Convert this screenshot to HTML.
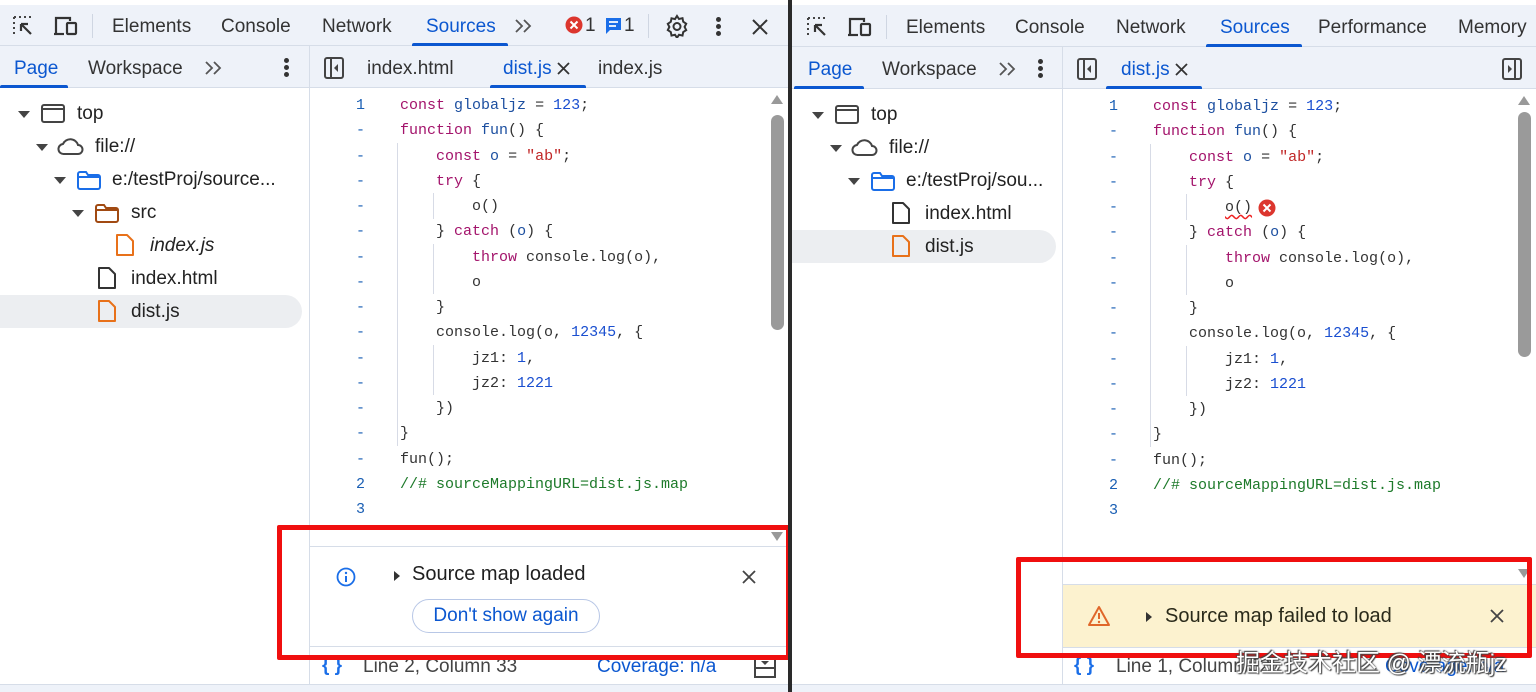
<!DOCTYPE html>
<html><head><meta charset="utf-8">
<style>
*{margin:0;padding:0;box-sizing:border-box}
body{width:1536px;height:692px;overflow:hidden;background:#fff;font-family:"Liberation Sans","Noto Sans CJK SC",sans-serif;color:#1f1f1f;position:relative}
.a{position:absolute}
.tb{background:#eef2f9;border-bottom:1px solid #d6dde8}
.t{position:absolute;font-size:19px;color:#333;white-space:nowrap}
.sel{color:#0b57d0}
.ul{position:absolute;height:3px;background:#0b57d0;border-radius:2px 2px 0 0}
.code{position:absolute;font-family:"Liberation Mono",monospace;font-size:15px;white-space:pre;line-height:25.25px}
.ln{position:absolute;font-family:"Liberation Mono",monospace;font-size:15px;line-height:25.25px;color:#1a5fb4;text-align:right;width:20px;white-space:pre}
.k{color:#a3136b}.v{color:#1c4fa0}.n{color:#1a4fd0}.s{color:#c02626}.c{color:#1d7a2a}.p{color:#333}
.guide{position:absolute;width:1px;background:#d7dbe6}
.tree{position:absolute;font-size:19px;color:#222;white-space:nowrap}
.tri{display:inline-block;width:0;height:0;border-left:6px solid transparent;border-right:6px solid transparent;border-top:7px solid #444}
</style></head><body>

<!-- ============ LEFT PANEL ============ -->
<div class="a tb" style="left:0;top:5px;width:788px;height:41px"></div>
<svg class="a" style="left:12px;top:15px" width="26" height="24" viewBox="0 0 26 24"><path d="M2 2h2M7 2h2M12 2h2M17 2h2M2 2v2M2 7v2M2 12v2M2 17v2" stroke="#444" stroke-width="2"/><path d="M9 9l10 10M9 9v7M9 9h7" stroke="#333" stroke-width="2.2" fill="none"/></svg>
<svg class="a" style="left:53px;top:15px" width="26" height="24" viewBox="0 0 26 24"><path d="M3 18V3h14v3" stroke="#333" stroke-width="2.2" fill="none"/><path d="M1 19h10" stroke="#333" stroke-width="2.2"/><rect x="14" y="8" width="9" height="11" rx="1" stroke="#333" stroke-width="2.2" fill="none"/></svg>
<div class="a" style="left:92px;top:14px;width:1px;height:24px;background:#cfd6e2"></div>
<div class="t" style="left:112px;top:16px">Elements</div>
<div class="t" style="left:221px;top:16px">Console</div>
<div class="t" style="left:322px;top:16px">Network</div>
<div class="t sel" style="left:426px;top:16px">Sources</div>
<div class="ul" style="left:412px;top:43px;width:96px"></div>
<svg class="a" style="left:514px;top:18px" width="20" height="16"><path d="M2 2l6 6-6 6M10 2l6 6-6 6" stroke="#555" stroke-width="1.8" fill="none"/></svg>
<svg class="a" style="left:565px;top:16px" width="18" height="18"><circle cx="9" cy="9" r="8.5" fill="#dc362e"/><path d="M5.5 5.5l7 7M12.5 5.5l-7 7" stroke="#fff" stroke-width="2"/></svg>
<div class="t" style="left:585px;top:15px">1</div>
<svg class="a" style="left:605px;top:17px" width="18" height="18"><path d="M1 1h15v12H5l-4 4z" fill="#1a6ee8"/><path d="M4 5h9M4 9h7" stroke="#fff" stroke-width="1.8"/></svg>
<div class="t" style="left:624px;top:15px">1</div>
<div class="a" style="left:648px;top:14px;width:1px;height:24px;background:#cfd6e2"></div>
<svg class="a" style="left:665px;top:14px" width="24" height="24" viewBox="0 0 24 24"><path d="M12 2l2 3 3.5-.8.7 3.5 3 2-1.6 3.2 1.6 3.2-3 2-.7 3.5-3.5-.8-2 3-2-3-3.5.8-.7-3.5-3-2L4.4 13 2.8 9.8l3-2 .7-3.5 3.5.8z" fill="none" stroke="#333" stroke-width="2"/><circle cx="12" cy="12.5" r="3.5" fill="none" stroke="#333" stroke-width="2"/></svg>
<div class="a" style="left:716px;top:17px;width:5px;height:5px;border-radius:50%;background:#333;box-shadow:0 7px 0 #333,0 14px 0 #333"></div>
<svg class="a" style="left:751px;top:18px" width="18" height="18"><path d="M2 2l14 14M16 2L2 16" stroke="#333" stroke-width="2"/></svg>

<div class="a tb" style="left:0;top:46px;width:788px;height:42px"></div>
<div class="a" style="left:309px;top:46px;width:1px;height:646px;background:#d6dde8"></div>
<div class="t sel" style="left:14px;top:58px">Page</div>
<div class="ul" style="left:0;top:85px;width:68px"></div>
<div class="t" style="left:88px;top:58px">Workspace</div>
<svg class="a" style="left:204px;top:60px" width="20" height="16"><path d="M2 2l6 6-6 6M10 2l6 6-6 6" stroke="#555" stroke-width="1.8" fill="none"/></svg>
<div class="a" style="left:284px;top:58px;width:5px;height:5px;border-radius:50%;background:#333;box-shadow:0 7px 0 #333,0 14px 0 #333"></div>
<svg class="a" style="left:324px;top:57px" width="20" height="22"><rect x="1" y="1" width="18" height="20" rx="2" fill="none" stroke="#444" stroke-width="2"/><path d="M7 1v20" stroke="#444" stroke-width="2"/><path d="M14 7l-4 4 4 4z" fill="#444"/></svg>
<div class="t" style="left:367px;top:58px">index.html</div>
<div class="t sel" style="left:503px;top:58px">dist.js</div>
<svg class="a" style="left:557px;top:62px" width="13" height="13"><path d="M1 1l11 11M12 1L1 12" stroke="#333" stroke-width="1.8"/></svg>
<div class="ul" style="left:490px;top:85px;width:96px"></div>
<div class="t" style="left:598px;top:58px">index.js</div>

<!-- tree left -->
<div class="a" style="left:0;top:295px;width:302px;height:33px;background:#eceef1;border-radius:0 17px 17px 0"></div>
<div class="tree" style="left:18px;top:102px"><span class="tri"></span></div>
<svg class="a" style="left:41px;top:104px" width="24" height="20"><rect x="1" y="1" width="22" height="17" rx="2" fill="none" stroke="#444" stroke-width="2"/><path d="M1 5h22" stroke="#444" stroke-width="2"/></svg>
<div class="tree" style="left:77px;top:103px">top</div>
<div class="tree" style="left:36px;top:135px"><span class="tri"></span></div>
<svg class="a" style="left:57px;top:136px" width="28" height="20"><path d="M7 18a5 5 0 0 1-1-10 8 8 0 0 1 15 1 4.5 4.5 0 0 1 0 9z" fill="none" stroke="#444" stroke-width="2"/></svg>
<div class="tree" style="left:95px;top:136px">file://</div>
<div class="tree" style="left:54px;top:168px"><span class="tri"></span></div>
<svg class="a" style="left:76px;top:170px" width="26" height="20"><path d="M2 4a2 2 0 0 1 2-2h6l2 3h10a2 2 0 0 1 2 2v10a2 2 0 0 1-2 2H4a2 2 0 0 1-2-2z" fill="none" stroke="#1a6ee8" stroke-width="2"/><path d="M2 7h22" stroke="#1a6ee8" stroke-width="2"/></svg>
<div class="tree" style="left:112px;top:169px">e:/testProj/source...</div>
<div class="tree" style="left:72px;top:201px"><span class="tri"></span></div>
<svg class="a" style="left:94px;top:203px" width="26" height="20"><path d="M2 4a2 2 0 0 1 2-2h6l2 3h10a2 2 0 0 1 2 2v10a2 2 0 0 1-2 2H4a2 2 0 0 1-2-2z" fill="none" stroke="#a14a12" stroke-width="2"/><path d="M2 7h22" stroke="#a14a12" stroke-width="2"/></svg>
<div class="tree" style="left:131px;top:202px">src</div>
<svg class="a" style="left:115px;top:233px" width="20" height="24"><path d="M2 2h10l6 6v14H2z" fill="none" stroke="#e8711a" stroke-width="2" stroke-linejoin="round"/></svg>
<div class="tree" style="left:150px;top:235px;font-style:italic">index.js</div>
<svg class="a" style="left:97px;top:266px" width="20" height="24"><path d="M2 2h10l6 6v14H2z" fill="none" stroke="#333" stroke-width="2" stroke-linejoin="round"/></svg>
<div class="tree" style="left:131px;top:268px">index.html</div>
<svg class="a" style="left:97px;top:299px" width="20" height="24"><path d="M2 2h10l6 6v14H2z" fill="none" stroke="#e8711a" stroke-width="2" stroke-linejoin="round"/></svg>
<div class="tree" style="left:131px;top:301px">dist.js</div>

<!-- code left -->
<div class="ln" style="left:345px;top:93px">1
-
-
-
-
-
-
-
-
-
-
-
-
-
-
2
3</div>
<div class="guide" style="left:397px;top:143px;height:303px"></div>
<div class="guide" style="left:433px;top:193px;height:26px"></div>
<div class="guide" style="left:433px;top:244px;height:50px"></div>
<div class="guide" style="left:433px;top:345px;height:50px"></div>
<div class="code" style="left:400px;top:93px"><span class="k">const</span> <span class="v">globaljz</span> <span class="p">=</span> <span class="n">123</span><span class="p">;</span>
<span class="k">function</span> <span class="v">fun</span><span class="p">() {</span>
    <span class="k">const</span> <span class="v">o</span> <span class="p">=</span> <span class="s">"ab"</span><span class="p">;</span>
    <span class="k">try</span> <span class="p">{</span>
        <span class="p">o()</span>
    <span class="p">}</span> <span class="k">catch</span> <span class="p">(</span><span class="v">o</span><span class="p">) {</span>
        <span class="k">throw</span> <span class="p">console.log(o),</span>
        <span class="p">o</span>
    <span class="p">}</span>
    <span class="p">console.log(o,</span> <span class="n">12345</span><span class="p">, {</span>
        <span class="p">jz1:</span> <span class="n">1</span><span class="p">,</span>
        <span class="p">jz2:</span> <span class="n">1221</span>
    <span class="p">})</span>
<span class="p">}</span>
<span class="p">fun();</span>
<span class="c">//# sourceMappingURL=dist.js.map</span>
</div>
<div class="a" style="left:771px;top:95px;border-left:6px solid transparent;border-right:6px solid transparent;border-bottom:9px solid #999"></div>
<div class="a" style="left:771px;top:115px;width:13px;height:215px;border-radius:7px;background:#9a9a9a"></div>
<div class="a" style="left:771px;top:532px;border-left:6px solid transparent;border-right:6px solid transparent;border-top:9px solid #999"></div>

<!-- info bar left -->
<div class="a" style="left:310px;top:546px;width:478px;height:1px;background:#d6dde8"></div>
<svg class="a" style="left:336px;top:567px" width="20" height="20"><circle cx="10" cy="10" r="8.5" fill="none" stroke="#1a6ee8" stroke-width="1.8"/><path d="M10 9v6" stroke="#1a6ee8" stroke-width="2"/><circle cx="10" cy="6" r="1.2" fill="#1a6ee8"/></svg>
<div class="a" style="left:394px;top:571px;border-top:5px solid transparent;border-bottom:5px solid transparent;border-left:6px solid #333"></div>
<div class="t" style="left:412px;top:563px;font-size:20px;color:#1f1f1f">Source map loaded</div>
<svg class="a" style="left:742px;top:570px" width="14" height="14"><path d="M1 1l12 12M13 1L1 13" stroke="#444" stroke-width="1.8"/></svg>
<div class="a" style="left:412px;top:599px;width:188px;height:34px;border:1px solid #b8c7e6;border-radius:17px;color:#0b57d0;font-size:19px;text-align:center;line-height:32px">Don't show again</div>
<div class="a" style="left:310px;top:646px;width:478px;height:1px;background:#d6dde8"></div>
<div class="t" style="left:322px;top:655px;color:#1a6ee8;font-weight:bold">{ }</div>
<div class="t" style="left:363px;top:656px;color:#444">Line 2, Column 33</div>
<div class="t" style="left:597px;top:656px;color:#0b57d0">Coverage: n/a</div>
<svg class="a" style="left:754px;top:656px" width="22" height="22"><rect x="1" y="1" width="20" height="20" fill="none" stroke="#444" stroke-width="2"/><path d="M1 12h20" stroke="#444" stroke-width="2"/><path d="M7 5h8l-4 4z" fill="#444"/></svg>
<div class="a" style="left:0;top:684px;width:788px;height:8px;background:#eef2f9;border-top:1px solid #d6dde8"></div>
<div class="a" style="left:277px;top:525px;width:514px;height:135px;border:5px solid #f00f0f;border-radius:2px"></div>

<!-- separator -->
<div class="a" style="left:788px;top:0;width:4px;height:692px;background:#2a2a2a"></div>

<!-- ============ RIGHT PANEL ============ -->
<div class="a tb" style="left:792px;top:5px;width:744px;height:42px"></div>
<svg class="a" style="left:806px;top:16px" width="26" height="24" viewBox="0 0 26 24"><path d="M2 2h2M7 2h2M12 2h2M17 2h2M2 2v2M2 7v2M2 12v2M2 17v2" stroke="#444" stroke-width="2"/><path d="M9 9l10 10M9 9v7M9 9h7" stroke="#333" stroke-width="2.2" fill="none"/></svg>
<svg class="a" style="left:847px;top:16px" width="26" height="24" viewBox="0 0 26 24"><path d="M3 18V3h14v3" stroke="#333" stroke-width="2.2" fill="none"/><path d="M1 19h10" stroke="#333" stroke-width="2.2"/><rect x="14" y="8" width="9" height="11" rx="1" stroke="#333" stroke-width="2.2" fill="none"/></svg>
<div class="a" style="left:886px;top:15px;width:1px;height:24px;background:#cfd6e2"></div>
<div class="t" style="left:906px;top:17px">Elements</div>
<div class="t" style="left:1015px;top:17px">Console</div>
<div class="t" style="left:1116px;top:17px">Network</div>
<div class="t sel" style="left:1220px;top:17px">Sources</div>
<div class="ul" style="left:1206px;top:44px;width:96px"></div>
<div class="t" style="left:1318px;top:17px">Performance</div>
<div class="t" style="left:1458px;top:17px">Memory</div>

<div class="a tb" style="left:792px;top:47px;width:744px;height:42px"></div>
<div class="a" style="left:1062px;top:47px;width:1px;height:645px;background:#d6dde8"></div>
<div class="t sel" style="left:808px;top:59px">Page</div>
<div class="ul" style="left:794px;top:86px;width:70px"></div>
<div class="t" style="left:882px;top:59px">Workspace</div>
<svg class="a" style="left:998px;top:61px" width="20" height="16"><path d="M2 2l6 6-6 6M10 2l6 6-6 6" stroke="#555" stroke-width="1.8" fill="none"/></svg>
<div class="a" style="left:1038px;top:59px;width:5px;height:5px;border-radius:50%;background:#333;box-shadow:0 7px 0 #333,0 14px 0 #333"></div>
<svg class="a" style="left:1077px;top:58px" width="20" height="22"><rect x="1" y="1" width="18" height="20" rx="2" fill="none" stroke="#444" stroke-width="2"/><path d="M7 1v20" stroke="#444" stroke-width="2"/><path d="M14 7l-4 4 4 4z" fill="#444"/></svg>
<div class="t sel" style="left:1121px;top:59px">dist.js</div>
<svg class="a" style="left:1175px;top:63px" width="13" height="13"><path d="M1 1l11 11M12 1L1 12" stroke="#333" stroke-width="1.8"/></svg>
<div class="ul" style="left:1106px;top:86px;width:96px"></div>
<svg class="a" style="left:1502px;top:58px" width="20" height="22"><rect x="1" y="1" width="18" height="20" rx="2" fill="none" stroke="#444" stroke-width="2"/><path d="M13 1v20" stroke="#444" stroke-width="2"/><path d="M6 7l4 4-4 4z" fill="#444"/></svg>

<div class="a" style="left:792px;top:230px;width:264px;height:33px;background:#eceef1;border-radius:0 17px 17px 0"></div>
<div class="tree" style="left:812px;top:103px"><span class="tri"></span></div>
<svg class="a" style="left:835px;top:105px" width="24" height="20"><rect x="1" y="1" width="22" height="17" rx="2" fill="none" stroke="#444" stroke-width="2"/><path d="M1 5h22" stroke="#444" stroke-width="2"/></svg>
<div class="tree" style="left:871px;top:104px">top</div>
<div class="tree" style="left:830px;top:136px"><span class="tri"></span></div>
<svg class="a" style="left:851px;top:137px" width="28" height="20"><path d="M7 18a5 5 0 0 1-1-10 8 8 0 0 1 15 1 4.5 4.5 0 0 1 0 9z" fill="none" stroke="#444" stroke-width="2"/></svg>
<div class="tree" style="left:889px;top:137px">file://</div>
<div class="tree" style="left:848px;top:169px"><span class="tri"></span></div>
<svg class="a" style="left:870px;top:171px" width="26" height="20"><path d="M2 4a2 2 0 0 1 2-2h6l2 3h10a2 2 0 0 1 2 2v10a2 2 0 0 1-2 2H4a2 2 0 0 1-2-2z" fill="none" stroke="#1a6ee8" stroke-width="2"/><path d="M2 7h22" stroke="#1a6ee8" stroke-width="2"/></svg>
<div class="tree" style="left:906px;top:170px">e:/testProj/sou...</div>
<svg class="a" style="left:891px;top:201px" width="20" height="24"><path d="M2 2h10l6 6v14H2z" fill="none" stroke="#333" stroke-width="2" stroke-linejoin="round"/></svg>
<div class="tree" style="left:925px;top:203px">index.html</div>
<svg class="a" style="left:891px;top:234px" width="20" height="24"><path d="M2 2h10l6 6v14H2z" fill="none" stroke="#e8711a" stroke-width="2" stroke-linejoin="round"/></svg>
<div class="tree" style="left:925px;top:236px">dist.js</div>

<div class="ln" style="left:1098px;top:94px">1
-
-
-
-
-
-
-
-
-
-
-
-
-
-
2
3</div>
<div class="guide" style="left:1150px;top:144px;height:303px"></div>
<div class="guide" style="left:1186px;top:194px;height:26px"></div>
<div class="guide" style="left:1186px;top:245px;height:50px"></div>
<div class="guide" style="left:1186px;top:346px;height:50px"></div>
<div class="code" style="left:1153px;top:94px"><span class="k">const</span> <span class="v">globaljz</span> <span class="p">=</span> <span class="n">123</span><span class="p">;</span>
<span class="k">function</span> <span class="v">fun</span><span class="p">() {</span>
    <span class="k">const</span> <span class="v">o</span> <span class="p">=</span> <span class="s">"ab"</span><span class="p">;</span>
    <span class="k">try</span> <span class="p">{</span>
        <span class="p" style="text-decoration:underline wavy #e22;text-underline-offset:3px">o()</span>
    <span class="p">}</span> <span class="k">catch</span> <span class="p">(</span><span class="v">o</span><span class="p">) {</span>
        <span class="k">throw</span> <span class="p">console.log(o),</span>
        <span class="p">o</span>
    <span class="p">}</span>
    <span class="p">console.log(o,</span> <span class="n">12345</span><span class="p">, {</span>
        <span class="p">jz1:</span> <span class="n">1</span><span class="p">,</span>
        <span class="p">jz2:</span> <span class="n">1221</span>
    <span class="p">})</span>
<span class="p">}</span>
<span class="p">fun();</span>
<span class="c">//# sourceMappingURL=dist.js.map</span>
</div>
<svg class="a" style="left:1258px;top:199px" width="18" height="18"><circle cx="9" cy="9" r="8.5" fill="#dc362e"/><path d="M5.5 5.5l7 7M12.5 5.5l-7 7" stroke="#fff" stroke-width="2"/></svg>
<div class="a" style="left:1518px;top:96px;border-left:6px solid transparent;border-right:6px solid transparent;border-bottom:9px solid #999"></div>
<div class="a" style="left:1518px;top:112px;width:13px;height:245px;border-radius:7px;background:#9a9a9a"></div>
<div class="a" style="left:1518px;top:569px;border-left:6px solid transparent;border-right:6px solid transparent;border-top:9px solid #999"></div>

<div class="a" style="left:1063px;top:584px;width:473px;height:1px;background:#d6dde8"></div>
<div class="a" style="left:1063px;top:585px;width:473px;height:62px;background:#fcf2cf"></div>
<svg class="a" style="left:1087px;top:605px" width="24" height="22"><path d="M12 2L22 20H2z" fill="none" stroke="#e0672a" stroke-width="2" stroke-linejoin="round"/><path d="M12 8v6" stroke="#e0672a" stroke-width="2"/><circle cx="12" cy="17" r="1.2" fill="#e0672a"/></svg>
<div class="a" style="left:1146px;top:612px;border-top:5px solid transparent;border-bottom:5px solid transparent;border-left:6px solid #333"></div>
<div class="t" style="left:1165px;top:605px;font-size:20px;color:#2a2a1a">Source map failed to load</div>
<svg class="a" style="left:1490px;top:609px" width="14" height="14"><path d="M1 1l12 12M13 1L1 13" stroke="#444" stroke-width="1.8"/></svg>
<div class="a" style="left:1063px;top:647px;width:473px;height:1px;background:#d6dde8"></div>
<div class="t" style="left:1074px;top:655px;color:#1a6ee8;font-weight:bold">{ }</div>
<div class="t" style="left:1116px;top:656px;color:#444">Line 1, Column 52</div>
<div class="t" style="left:1385px;top:656px;color:#0b57d0">Coverage: n/a</div>
<div class="a" style="left:792px;top:684px;width:744px;height:8px;background:#eef2f9;border-top:1px solid #d6dde8"></div>
<div class="a" style="left:1016px;top:557px;width:516px;height:101px;border:5px solid #f00f0f;border-radius:2px"></div>
<div class="a" style="left:1236px;top:643px;font-size:24px;color:#fff;white-space:nowrap;text-shadow:0 0 2px #444,1px 1px 1px #444,-1px -1px 1px #444;font-family:'Liberation Sans','Noto Sans CJK SC',sans-serif">掘金技术社区 @ 漂流瓶jz</div>
</body></html>
